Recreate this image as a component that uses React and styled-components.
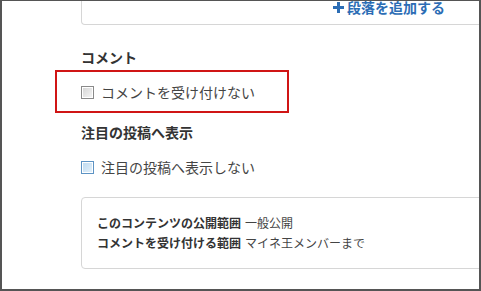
import styled, { createGlobalStyle } from "styled-components";

const Global = createGlobalStyle`
  html, body {
    margin: 0;
    padding: 0;
    background: #fff;
  }
  body {
    font-family: "Noto Sans CJK JP", "Noto Sans", sans-serif;
  }
`;

const Frame = styled.div`
  position: relative;
  box-sizing: border-box;
  width: 481px;
  height: 291px;
  border: 2px solid #555;
  border-top-width: 1px;
  overflow: hidden;
  background: #fff;
`;

const Column = styled.div`
  display: flex;
  flex-direction: column;
  padding-left: 79px;
`;

const Card = styled.div`
  box-sizing: border-box;
  width: 440px;
  border: 1px solid #d6d6d6;
  border-radius: 4px;
  background: #fff;
`;

const TopCard = styled(Card)`
  height: 24px;
  border-top: none;
  border-top-left-radius: 0;
  border-top-right-radius: 0;
  display: flex;
  justify-content: flex-end;
  align-items: flex-start;
  padding-right: 75px;
`;

const AddLink = styled.a`
  display: flex;
  align-items: center;
  gap: 3px;
  margin-top: -3px;
  color: #2c6db5;
  font-size: 14px;
  font-weight: 700;
  line-height: 18px;
  text-decoration: none;
`;

const Heading = styled.div`
  margin-top: ${(p) => p.$top}px;
  color: #333;
  font-size: 14px;
  font-weight: 700;
  line-height: 20px;
`;

const CheckRow = styled.label`
  display: flex;
  align-items: center;
  gap: 7px;
  margin-top: 15px;
  color: #444;
  font-size: 14px;
  line-height: 20px;
`;

const Box = styled.span`
  box-sizing: border-box;
  width: 13px;
  height: 13px;
  border: 1px solid ${(p) => (p.$blue ? "#5d93c4" : "#8a8a8a")};
  background: ${(p) =>
    p.$blue
      ? "linear-gradient(135deg, #bcd9f0, #e6f2fb)"
      : "linear-gradient(135deg, #d3d3d3, #f7f7f7)"};
  box-shadow: inset 0 0 0 1px #fff;
`;

const InfoCard = styled(Card)`
  margin-top: 20px;
  height: 72px;
  padding: 15px 0 0 15px;
  font-size: 12px;
  line-height: 20px;
  color: #444;
`;

const InfoLine = styled.div`
  white-space: nowrap;
`;

const InfoKey = styled.b`
  color: #333;
  font-weight: 700;
  margin-right: 4px;
`;

const NextCard = styled(Card)`
  margin-top: 20px;
  height: 40px;
`;

const Highlight = styled.div`
  position: absolute;
  left: 53px;
  top: 69px;
  width: 234px;
  height: 43px;
  box-sizing: border-box;
  border: 2px solid #d01515;
  pointer-events: none;
`;

const Plus = () => (
  <svg width="11" height="11" viewBox="0 0 11 11">
    <path d="M4 0h3v4h4v3H7v4H4V7H0V4h4z" fill="#2c6db5" />
  </svg>
);

export default function App() {
  return (
    <>
      <Global />
      <Frame>
        <Column>
          <TopCard>
            <AddLink href="#">
              <Plus />
              段落を追加する
            </AddLink>
          </TopCard>
          <Heading $top={22}>コメント</Heading>
          <CheckRow>
            <Box />
            コメントを受け付けない
          </CheckRow>
          <Heading $top={20}>注目の投稿へ表示</Heading>
          <CheckRow>
            <Box $blue />
            注目の投稿へ表示しない
          </CheckRow>
          <InfoCard>
            <InfoLine>
              <InfoKey>このコンテンツの公開範囲</InfoKey>一般公開
            </InfoLine>
            <InfoLine>
              <InfoKey>コメントを受け付ける範囲</InfoKey>マイネ王メンバーまで
            </InfoLine>
          </InfoCard>
          <NextCard />
        </Column>
        <Highlight />
      </Frame>
    </>
  );
}
